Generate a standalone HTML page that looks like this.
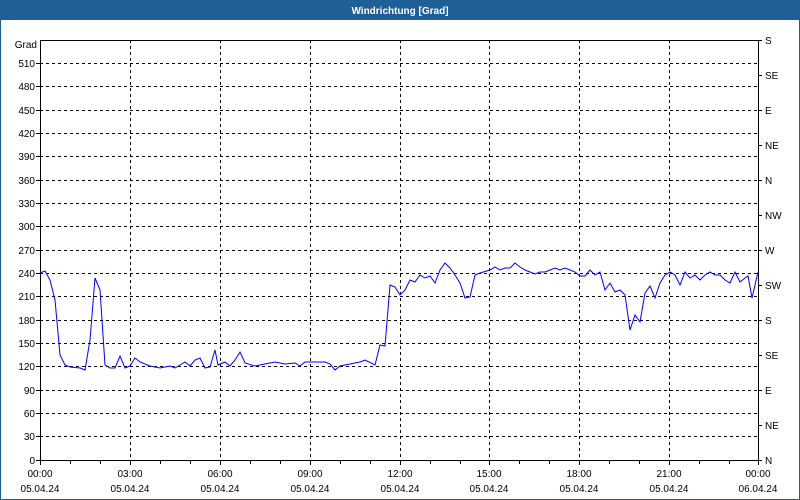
<!DOCTYPE html>
<html><head><style>
html,body{margin:0;padding:0;width:800px;height:500px;overflow:hidden;background:#fff}
</style></head><body>
<svg width="800" height="500" xmlns="http://www.w3.org/2000/svg" font-family="Liberation Sans, sans-serif" font-size="10">
<rect x="0" y="0" width="800" height="500" fill="#fff"/>
<rect x="0.5" y="0.5" width="799" height="499" fill="none" stroke="#1e5f96"/>
<rect x="0" y="0" width="800" height="20" fill="#1e5f96"/>
<text x="400" y="14" fill="#fff" font-weight="bold" text-anchor="middle">Windrichtung [Grad]</text>
<g stroke="#000" stroke-dasharray="3,3" stroke-width="1">
<line x1="40" x2="758" y1="63.5" y2="63.5"/><line x1="40" x2="758" y1="86.5" y2="86.5"/><line x1="40" x2="758" y1="110.5" y2="110.5"/><line x1="40" x2="758" y1="133.5" y2="133.5"/><line x1="40" x2="758" y1="156.5" y2="156.5"/><line x1="40" x2="758" y1="180.5" y2="180.5"/><line x1="40" x2="758" y1="203.5" y2="203.5"/><line x1="40" x2="758" y1="226.5" y2="226.5"/><line x1="40" x2="758" y1="250.5" y2="250.5"/><line x1="40" x2="758" y1="273.5" y2="273.5"/><line x1="40" x2="758" y1="296.5" y2="296.5"/><line x1="40" x2="758" y1="320.5" y2="320.5"/><line x1="40" x2="758" y1="343.5" y2="343.5"/><line x1="40" x2="758" y1="366.5" y2="366.5"/><line x1="40" x2="758" y1="390.5" y2="390.5"/><line x1="40" x2="758" y1="413.5" y2="413.5"/><line x1="40" x2="758" y1="436.5" y2="436.5"/>
<line x1="130.5" x2="130.5" y1="40" y2="460"/><line x1="220.5" x2="220.5" y1="40" y2="460"/><line x1="310.5" x2="310.5" y1="40" y2="460"/><line x1="400.5" x2="400.5" y1="40" y2="460"/><line x1="489.5" x2="489.5" y1="40" y2="460"/><line x1="579.5" x2="579.5" y1="40" y2="460"/><line x1="669.5" x2="669.5" y1="40" y2="460"/>
</g>
<g stroke="#000" stroke-width="1" fill="none">
<line x1="40.5" x2="40.5" y1="40" y2="461"/><line x1="758.5" x2="758.5" y1="40" y2="461"/>
<line x1="40" x2="759" y1="40.5" y2="40.5"/><line x1="40" x2="759" y1="460.5" y2="460.5"/>
</g>
<g stroke="#000">
<path d="M70.5 460v4M100.5 460v4M130.5 460v5M160.5 460v4M190.5 460v4M220.5 460v5M250.5 460v4M280.5 460v4M310.5 460v5M340.5 460v4M370.5 460v4M400.5 460v5M430.5 460v4M460.5 460v4M489.5 460v5M519.5 460v4M549.5 460v4M579.5 460v5M609.5 460v4M639.5 460v4M669.5 460v5M699.5 460v4M729.5 460v4M758.5 460v5M40.5 460v5"/>
<path d="M36 63.5h4M36 86.5h4M36 110.5h4M36 133.5h4M36 156.5h4M36 180.5h4M36 203.5h4M36 226.5h4M36 250.5h4M36 273.5h4M36 296.5h4M36 320.5h4M36 343.5h4M36 366.5h4M36 390.5h4M36 413.5h4M36 436.5h4M36 460.5h4"/>
<path d="M758 40.5h4M758 75.5h4M758 110.5h4M758 145.5h4M758 180.5h4M758 215.5h4M758 250.5h4M758 285.5h4M758 320.5h4M758 355.5h4M758 390.5h4M758 425.5h4M758 460.5h4"/>
</g>
<g fill="#000" text-anchor="end">
<text x="37" y="48">Grad</text>
<text x="35" y="67">510</text><text x="35" y="90">480</text><text x="35" y="114">450</text><text x="35" y="137">420</text><text x="35" y="160">390</text><text x="35" y="184">360</text><text x="35" y="207">330</text><text x="35" y="230">300</text><text x="35" y="254">270</text><text x="35" y="277">240</text><text x="35" y="300">210</text><text x="35" y="324">180</text><text x="35" y="347">150</text><text x="35" y="370">120</text><text x="35" y="394">90</text><text x="35" y="417">60</text><text x="35" y="440">30</text><text x="35" y="464">0</text>
</g>
<g fill="#000">
<text x="765" y="44">S</text><text x="765" y="79">SE</text><text x="765" y="114">E</text><text x="765" y="149">NE</text><text x="765" y="184">N</text><text x="765" y="219">NW</text><text x="765" y="254">W</text><text x="765" y="289">SW</text><text x="765" y="324">S</text><text x="765" y="359">SE</text><text x="765" y="394">E</text><text x="765" y="429">NE</text><text x="765" y="464">N</text>
</g>
<g fill="#000" text-anchor="middle">
<text x="40" y="477">00:00</text><text x="130" y="477">03:00</text><text x="220" y="477">06:00</text><text x="310" y="477">09:00</text><text x="400" y="477">12:00</text><text x="489" y="477">15:00</text><text x="579" y="477">18:00</text><text x="669" y="477">21:00</text><text x="758" y="477">00:00</text>
<text x="40" y="492">05.04.24</text><text x="130" y="492">05.04.24</text><text x="220" y="492">05.04.24</text><text x="310" y="492">05.04.24</text><text x="400" y="492">05.04.24</text><text x="489" y="492">05.04.24</text><text x="579" y="492">05.04.24</text><text x="669" y="492">05.04.24</text><text x="758" y="492">06.04.24</text>
</g>
<polyline fill="none" stroke="#0000ff" stroke-width="1" points="40,273 45,271 50,280 55,300 60,355 65,365 70,367 80,368 85,370 90,340 95,278 100,290 105,365 110,368 115,368 120,356 125,368 130,366 135,358 140,362 150,366 160,368 170,366 175,368 180,365 185,362 190,366 195,360 200,358 205,368 210,367 215,350 218,365 225,362 230,366 235,360 240,352 245,363 255,366 265,364 275,362 285,364 295,363 300,366 305,362 315,362 325,362 330,364 335,370 340,366 350,364 360,362 365,360 375,365 380,345 385,346 390,285 395,287 400,295 405,290 410,280 415,282 420,275 425,278 430,276 435,283 440,270 445,263 450,268 455,275 460,283 465,298 470,297 475,275 480,273 490,270 495,267 500,270 505,268 510,268 515,263 520,267 525,270 530,272 535,274 540,272 545,272 550,270 555,268 560,270 565,268 570,270 575,272 580,276 585,276 590,270 595,275 600,272 605,290 610,283 615,292 620,290 625,295 630,330 635,315 640,322 645,293 650,286 655,298 660,283 665,275 670,272 675,275 680,285 685,272 690,278 695,275 700,280 705,275 710,272 715,275 720,275 725,280 730,283 735,272 740,282 745,278 748,276 752,298 755,285 758,272"/>
</svg>
</body></html>
